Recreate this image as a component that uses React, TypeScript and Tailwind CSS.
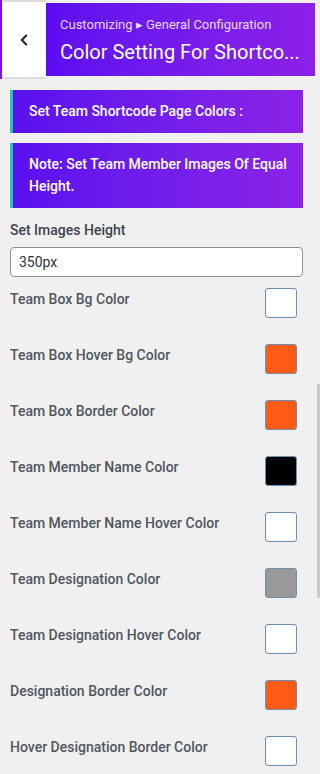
import React from 'react';
import { ChevronLeft } from 'lucide-react';

interface ColorRow {
  label: string;
  color: string;
}

const rows: ColorRow[] = [
  { label: 'Team Box Bg Color', color: '#ffffff' },
  { label: 'Team Box Hover Bg Color', color: '#ff5b16' },
  { label: 'Team Box Border Color', color: '#ff5b16' },
  { label: 'Team Member Name Color', color: '#000000' },
  { label: 'Team Member Name Hover Color', color: '#ffffff' },
  { label: 'Team Designation Color', color: '#999999' },
  { label: 'Team Designation Hover Color', color: '#ffffff' },
  { label: 'Designation Border Color', color: '#ff5b16' },
  { label: 'Hover Designation Border Color', color: '#ffffff' },
];

const Notice: React.FC<{ children: React.ReactNode }> = ({ children }) => (
  <div className="border-l-[3px] border-[#1fc8a6] bg-gradient-to-r from-[#5a0ff0] to-[#8b22e6] px-[16px] pb-[11px] pt-[10px] text-[14px] font-medium leading-[22px] text-white">
    {children}
  </div>
);

const App: React.FC = () => {
  return (
    <div className="relative min-h-[774px] w-[320px] overflow-hidden bg-[#f0f0f1] font-['Roboto',sans-serif]">
      {/* header */}
      <div className="flex h-[79px]">
        <div className="w-[2px] bg-[#7a12f0]" />
        <div className="flex w-[44px] items-center justify-center border-y-[2px] border-[#dcdcde] bg-white">
          <ChevronLeft className="h-[18px] w-[18px] text-[#1d2327]" strokeWidth={2.75} />
        </div>
        <div className="my-[3px] flex min-w-0 flex-1 flex-col justify-center bg-gradient-to-r from-[#5d0cf2] to-[#8d20e6] pl-[14px] pr-[10px]">
          <div className="text-[13px] leading-[18px] text-[#e8dcff]">Customizing ▸ General Configuration</div>
          <div className="mt-[6px] whitespace-nowrap text-[20px] leading-[24px] text-white">Color Setting For Shortco...</div>
        </div>
        <div className="w-[5px]" />
      </div>

      <div className="flex flex-col pl-[10px] pr-[17px] pt-[11px]">
        <Notice>Set Team Shortcode Page Colors :</Notice>
        <div className="mt-[10px]">
          <Notice>Note: Set Team Member Images Of Equal Height.</Notice>
        </div>

        <div className="mt-[12px] text-[14px] font-medium leading-[20px] text-[#3c434a]">Set Images Height</div>
        <input
          readOnly
          value="350px"
          className="mt-[7px] h-[30px] w-full rounded-[4px] border border-[#8c8f94] bg-white px-[8px] text-[14px] text-[#2c3338] outline-none"
        />

        <div className="mt-[11px] flex flex-col">
          {rows.map((r) => (
            <div key={r.label} className="flex h-[56px] items-start justify-between">
              <span className="mt-[1px] text-[14px] font-medium leading-[20px] text-[#50575e]">{r.label}</span>
              <span
                className="mr-[6px] h-[30px] w-[32px] rounded-[3px] border border-[#6e8fae]"
                style={{ backgroundColor: r.color }}
              />
            </div>
          ))}
        </div>
      </div>

      {/* scrollbar */}
      <div className="absolute left-[317px] top-[384px] h-[214px] w-[3px] bg-[#c9c9c9]" />
    </div>
  );
};

export default App;
